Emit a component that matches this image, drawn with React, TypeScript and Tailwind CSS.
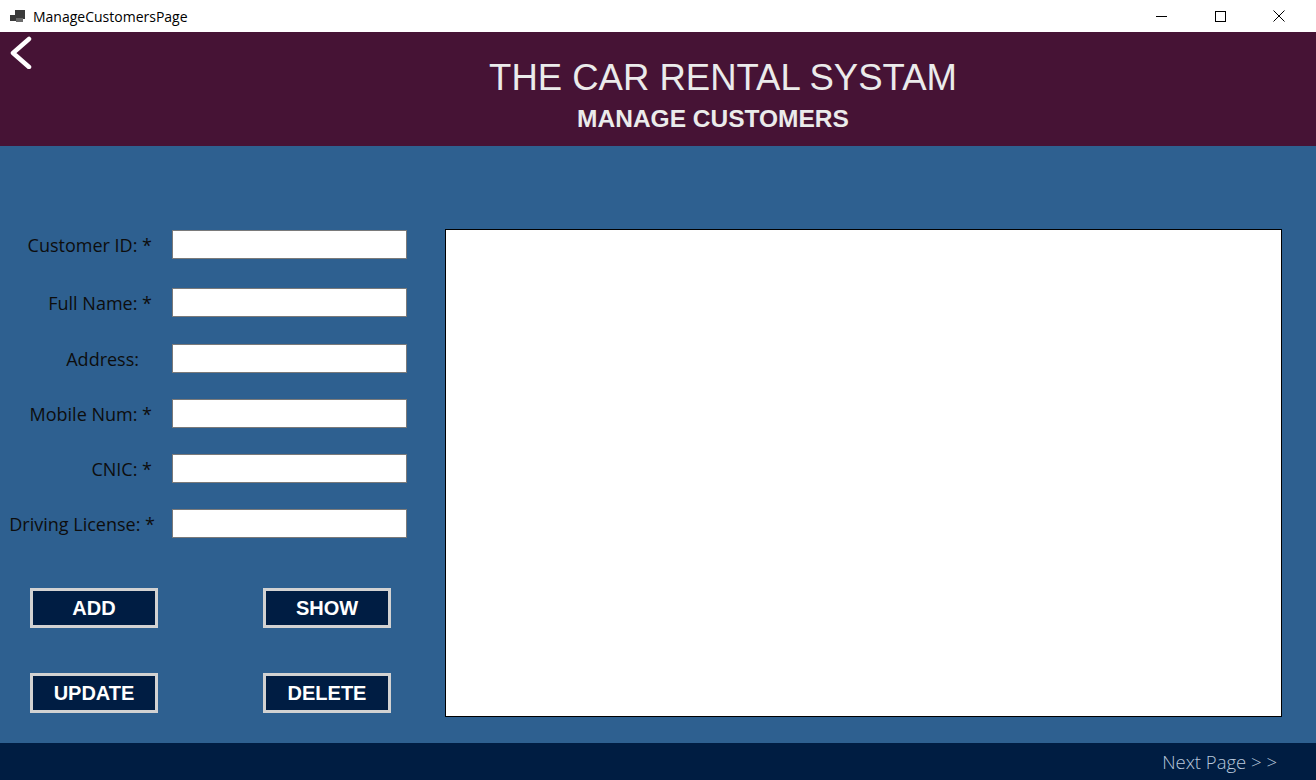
import React from "react";

const labelFont = { fontFamily: '"Open Sans", "Noto Sans", sans-serif' } as const;

function Row({ label, pr, mt }: { label: string; pr: string; mt: string }) {
  return (
    <div className={`flex items-center ${mt}`}>
      <div className={`w-[172px] shrink-0 text-right text-[18px] leading-none text-[#0d0d0d] ${pr}`} style={labelFont}>
        {label}
      </div>
      <div className="h-[29px] w-[235px] border border-[#7a7a7a] bg-white" />
    </div>
  );
}

function Btn({ children }: { children: React.ReactNode }) {
  return (
    <button className="flex h-[40px] w-[128px] items-center justify-center border-[3px] border-[#d2d2d2] bg-[#001d43] font-['Liberation_Sans',Arial,sans-serif] text-[20px] font-bold text-white">
      {children}
    </button>
  );
}

export default function App() {
  return (
    <div className="flex h-[780px] w-[1316px] flex-col overflow-hidden bg-[#2e6090]">
      {/* title bar */}
      <div className="flex h-[32px] shrink-0 items-center bg-white">
        <svg className="ml-[10px]" width="16" height="14" viewBox="0 0 16 14">
          <rect x="5" y="1" width="10" height="9" fill="#3a3a3a" />
          <rect x="0" y="6" width="6" height="6" fill="#3a3a3a" />
          <rect x="6" y="9" width="7" height="4" fill="#6a6a6a" />
        </svg>
        <span className="ml-[7px] text-[14px] text-black" style={{ fontFamily: '"Open Sans", "Noto Sans", sans-serif' }}>
          ManageCustomersPage
        </span>
        <div className="ml-auto flex h-full items-center">
          <div className="flex h-full w-[46px] items-center justify-center">
            <div className="h-px w-[11px] bg-black" />
          </div>
          <div className="ml-[13px] flex h-full w-[46px] items-center justify-center">
            <div className="h-[11px] w-[11px] border border-black" />
          </div>
          <div className="ml-[13px] mr-[14px] flex h-full w-[46px] items-center justify-center">
            <svg width="12" height="12" viewBox="0 0 12 12">
              <path d="M0.5 0.5 L11.5 11.5 M11.5 0.5 L0.5 11.5" stroke="#000" strokeWidth="1" />
            </svg>
          </div>
        </div>
      </div>

      {/* header */}
      <div className="relative flex h-[114px] shrink-0 flex-col items-center bg-[#461335] font-['Liberation_Sans',Arial,sans-serif] text-[#ebebeb]">
        <svg className="absolute left-[8px] top-[3px]" width="26" height="34" viewBox="0 0 26 34">
          <path d="M21 4 L5 18 L21 32" stroke="#ffffff" strokeWidth="4.5" fill="none" strokeLinecap="round" strokeLinejoin="round" />
        </svg>
        <div className="mt-[26px] pl-[130px] text-[36.5px] leading-[40px]">THE CAR RENTAL SYSTAM</div>
        <div className="mt-[7px] pl-[110px] text-[24.5px] font-bold leading-[28px]">MANAGE CUSTOMERS</div>
      </div>

      {/* body */}
      <div className="flex flex-1">
        <div className="flex w-[445px] shrink-0 flex-col pt-[84px]">
          <Row label="Customer ID: *" pr="pr-[20px]" mt="mt-0" />
          <Row label="Full Name: *" pr="pr-[20px]" mt="mt-[29px]" />
          <Row label="Address:" pr="pr-[33px]" mt="mt-[27px]" />
          <Row label="Mobile Num: *" pr="pr-[20px]" mt="mt-[26px]" />
          <Row label="CNIC: *" pr="pr-[20px]" mt="mt-[26px]" />
          <Row label="Driving License: *" pr="pr-[17px]" mt="mt-[26px]" />
          <div className="mt-[50px] flex gap-[105px] pl-[30px]">
            <Btn>ADD</Btn>
            <Btn>SHOW</Btn>
          </div>
          <div className="mt-[45px] flex gap-[105px] pl-[30px]">
            <Btn>UPDATE</Btn>
            <Btn>DELETE</Btn>
          </div>
        </div>
        <div className="pt-[83px]">
          <div className="h-[488px] w-[837px] border border-black bg-white" />
        </div>
      </div>

      {/* footer */}
      <div className="flex h-[37px] shrink-0 items-center justify-end bg-[#001d42] pr-[39px]">
        <span className="text-[18.5px] font-light text-[#b8c8dc]" style={{ fontFamily: '"Open Sans", "Noto Sans", sans-serif' }}>
          Next Page &gt; &gt;
        </span>
      </div>
    </div>
  );
}
